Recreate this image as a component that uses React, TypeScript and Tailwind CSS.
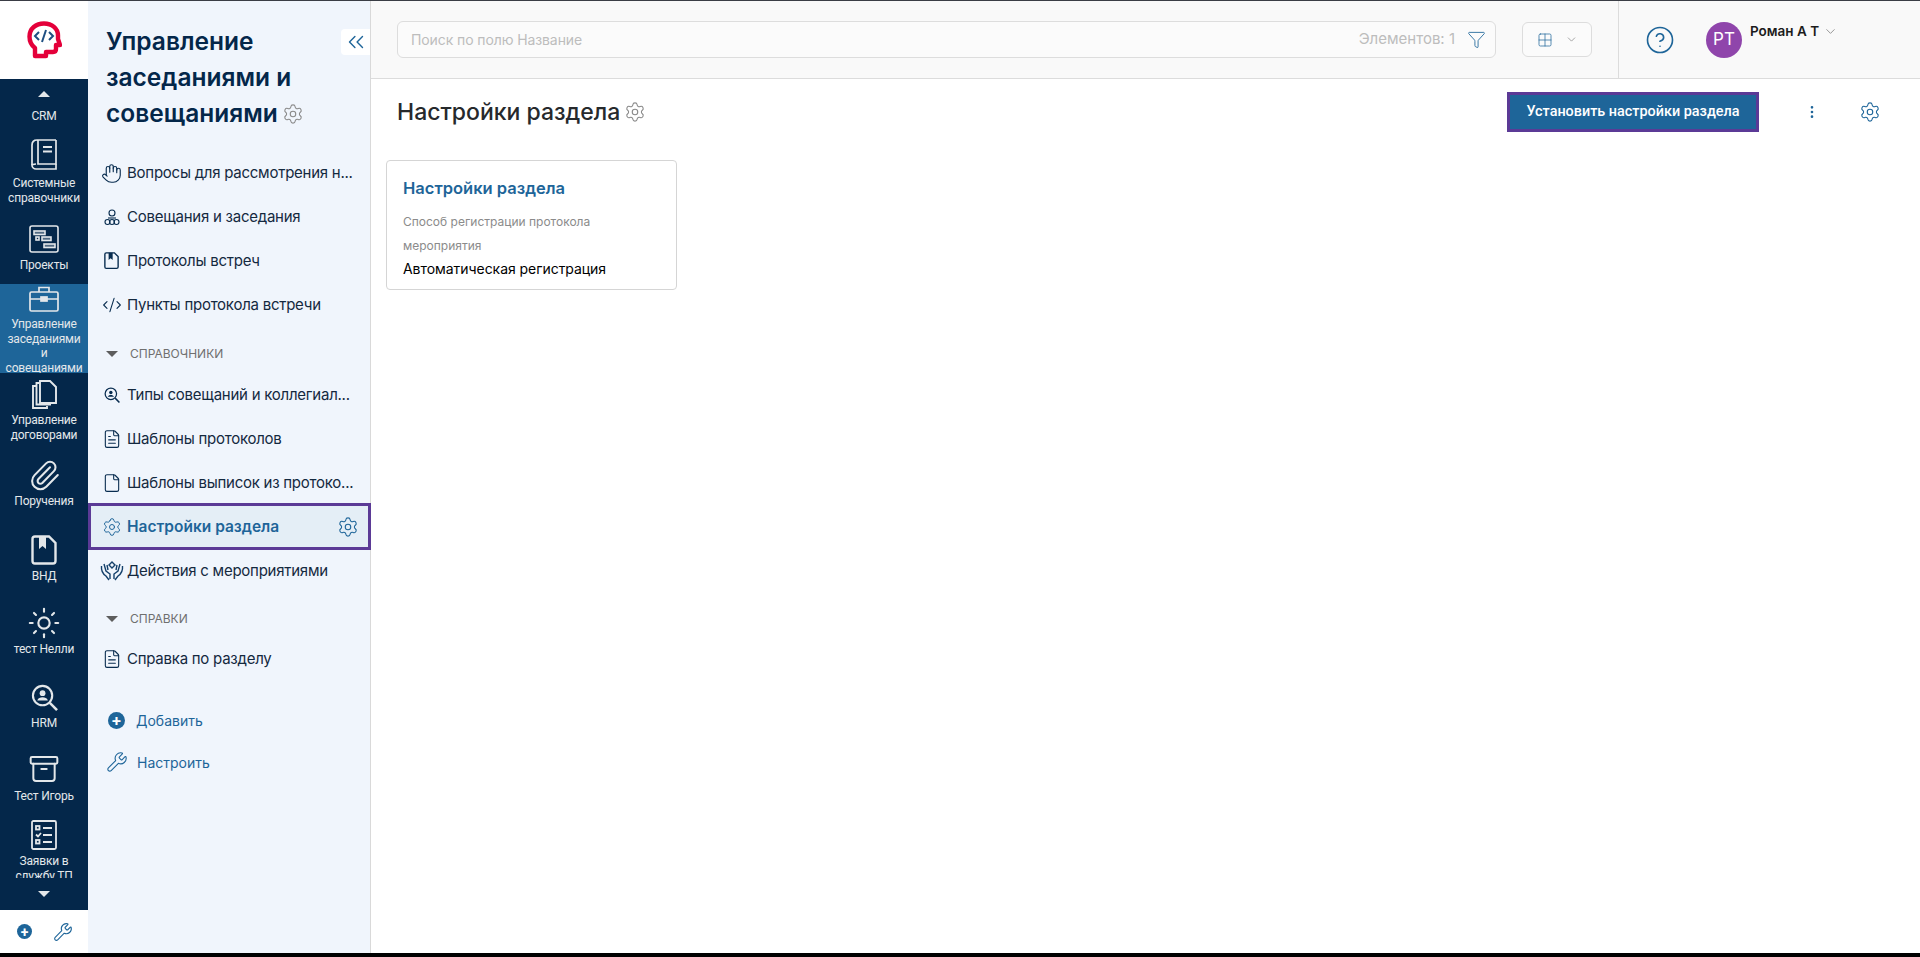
import type { ReactNode } from 'react';
import {
  Archive,
  ChevronDown,
  ChevronsLeft,
  CircleHelp,
  CodeXml,
  File,
  FileText,
  Funnel,
  Grid2x2,
  EllipsisVertical,
  Hand,
  Paperclip,
  Settings,
  Sun,
  Wrench,
} from 'lucide-react';

const inter = "font-['Inter','Noto_Sans',sans-serif]";

function Logo() {
  return (
    <svg width="35" height="38" viewBox="0 0 35 38" fill="none">
      <path
        d="M8 35V27C4 24 2.5 20 2.5 15.5C2.5 7.5 9 2.5 17 2.5C25 2.5 31 7.5 31 14.5V18L33 24H29V28C29 30 28 31 26 31H19V35H8Z"
        stroke="#e4003a"
        strokeWidth="4.4"
        strokeLinejoin="round"
      />
      <path d="M12 11L8 15L12 19M22 11L26 15L22 19M19 9L15 21" stroke="#1e4f82" strokeWidth="2" />
    </svg>
  );
}

function BookIcon() {
  return (
    <svg width="26" height="31" viewBox="0 0 26 31" fill="none" stroke="#e3e7ea" strokeWidth="1.7">
      <path d="M25 1H6C3 1 1 3 1 6V26C1 28.5 3 30 5 30H25V25" />
      <path d="M7 1V25H25V1" />
      <path d="M1 26C1 25.5 3 25 5 25" />
      <path d="M12 8H21M12 12.5H21" strokeWidth="2" />
    </svg>
  );
}

function PlanIcon() {
  return (
    <svg width="30" height="28" viewBox="0 0 30 28" fill="none" stroke="#e3e7ea" strokeWidth="1.6">
      <rect x="1" y="1" width="28" height="26" rx="2" />
      <rect x="5" y="6" width="11" height="3.5" fill="#e3e7ea" fillOpacity=".35" />
      <rect x="7" y="12" width="3" height="3" />
      <rect x="13" y="12" width="9" height="3.5" fill="#e3e7ea" fillOpacity=".35" />
      <rect x="15" y="19" width="11" height="3.5" fill="#e3e7ea" fillOpacity=".35" />
    </svg>
  );
}

function CaseIcon() {
  return (
    <svg width="30" height="26" viewBox="0 0 30 26" fill="none" stroke="#e3e7ea" strokeWidth="1.7">
      <rect x="1" y="6" width="28" height="19" rx="1.5" />
      <path d="M10 6V1.5H20V6" />
      <path d="M1 13H12M18 13H29" />
      <rect x="12" y="11" width="6" height="4" fill="#e3e7ea" />
    </svg>
  );
}

function FilesIcon() {
  return (
    <svg width="25" height="29" viewBox="0 0 25 29" fill="none" stroke="#e3e7ea" strokeWidth="1.9">
      <path d="M4 6H1V28H15V26" />
      <path d="M7 3H4.5V24.5H19" />
      <path d="M8 1H18L24 7V23H8Z" />
    </svg>
  );
}

function BookmarkDoc({ size = 26, color = '#e3e7ea' }: { size?: number; color?: string }) {
  return (
    <svg width={size} height={(size * 30) / 26} viewBox="0 0 26 30" fill="none" stroke={color} strokeWidth="2.4">
      <path d="M4 1.5H18L24.5 8V26C24.5 27.5 23.5 28.5 22 28.5H4C2.5 28.5 1.5 27.5 1.5 26V4C1.5 2.5 2.5 1.5 4 1.5Z" />
      <path d="M8 1.5V14L11.5 11L15 14V1.5Z" fill={color} stroke="none" />
    </svg>
  );
}

function PersonSearch({ size = 28, color = '#e3e7ea' }: { size?: number; color?: string }) {
  return (
    <svg width={size} height={size} viewBox="0 0 28 28" fill="none" stroke={color} strokeWidth="2.2">
      <circle cx="12" cy="12" r="10" />
      <path d="M19.5 19.5L27 27" strokeWidth="2.6" />
      <circle cx="12" cy="9.5" r="3" fill={color} stroke="none" />
      <path d="M6.5 17C7.5 14.5 9.5 13.8 12 13.8S16.5 14.5 17.5 17Z" fill={color} stroke="none" />
    </svg>
  );
}

function ChecklistIcon() {
  return (
    <svg width="26" height="30" viewBox="0 0 26 30" fill="none" stroke="#e3e7ea" strokeWidth="1.8">
      <rect x="1" y="1" width="24" height="28" rx="1.5" />
      <rect x="5" y="6" width="3.5" height="3.5" />
      <path d="M12 8H21M5 14.5L7 16.5L10 13M12 15H21M12 22H21" />
      <rect x="5" y="20" width="3.5" height="3.5" />
    </svg>
  );
}

function MeetingIcon() {
  return (
    <svg width="16" height="17" viewBox="0 0 16 17" fill="none" stroke="#082c4f" strokeWidth="1.1">
      <circle cx="8" cy="4" r="3" />
      <path d="M4 9H12" />
      <circle cx="3.5" cy="13" r="2.5" />
      <circle cx="8" cy="13" r="2.5" />
      <circle cx="12.5" cy="13" r="2.5" />
    </svg>
  );
}

function HandsIcon() {
  return (
    <svg width="24" height="20" viewBox="0 0 24 20" fill="none" stroke="#14406b" strokeWidth="1.4">
      <path d="M12 1L15 4L12 7L9 4Z" />
      <path d="M1.5 5C1 10 3 13 6 15L9 19M4 3L6 10L10 13V18" />
      <path d="M7 4L8 9" />
      <path d="M22.5 5C23 10 21 13 18 15L15 19M20 3L18 10L14 13V18" />
      <path d="M17 4L16 9" />
    </svg>
  );
}

function RailItem({
  height,
  top,
  gap = 'mt-[4px]',
  icon,
  active,
  children,
}: {
  height: string;
  top: string;
  gap?: string;
  icon: ReactNode;
  active?: boolean;
  children: ReactNode;
}) {
  return (
    <div className={`${height} ${top} ${active ? 'bg-[#1e6599]' : ''} flex shrink-0 flex-col items-center overflow-hidden`}>
      <div className="flex h-[30px] shrink-0 items-center justify-center">{icon}</div>
      <div className={`${gap} text-center text-[12px] leading-[14.6px] tracking-[-0.2px] text-[#e3e7ea]`}>{children}</div>
    </div>
  );
}

function Rail() {
  const ic = { color: '#e3e7ea', strokeWidth: 1.5 };
  return (
    <aside className="flex w-[88px] shrink-0 flex-col bg-[#04274a] font-['Roboto',sans-serif]">
      <div className="flex h-[78px] shrink-0 items-center justify-center bg-white">
        <Logo />
      </div>
      <div className="flex min-h-0 flex-1 flex-col overflow-hidden">
        <div className="flex h-[54px] shrink-0 flex-col items-center pt-[12px]">
          <div className="h-0 w-0 border-x-[6px] border-b-[6px] border-x-transparent border-b-[#e3e7ea]" />
          <div className="mt-[12px] text-[12px] leading-[15px] tracking-[-0.2px] text-[#e3e7ea]">CRM</div>
        </div>
        <RailItem height="h-[83px]" top="pt-[6px]" gap="mt-[7px]" icon={<BookIcon />}>
          Системные<br />справочники
        </RailItem>
        <RailItem height="h-[68px]" top="pt-[8px]" icon={<PlanIcon />}>
          Проекты
        </RailItem>
        <RailItem height="h-[89px]" top="pt-0" gap="mt-[3px]" icon={<CaseIcon />} active>
          Управление<br />заседаниями<br />и<br />совещаниями
        </RailItem>
        <RailItem height="h-[79px]" top="pt-[6px]" icon={<FilesIcon />}>
          Управление<br />договорами
        </RailItem>
        <RailItem height="h-[75px]" top="pt-[8px]" icon={<Paperclip size={33} {...ic} />}>
          Поручения
        </RailItem>
        <RailItem height="h-[75px]" top="pt-[8px]" icon={<BookmarkDoc />}>
          ВНД
        </RailItem>
        <RailItem height="h-[76px]" top="pt-[6px]" icon={<Sun size={34} {...ic} />}>
          тест Нелли
        </RailItem>
        <RailItem height="h-[71px]" top="pt-[4px]" icon={<PersonSearch size={27} />}>
          HRM
        </RailItem>
        <RailItem height="h-[63px]" top="pt-[5px]" gap="mt-[5px]" icon={<Archive size={32} {...ic} />}>
          Тест Игорь
        </RailItem>
        <RailItem height="h-[66px]" top="pt-[8px]" icon={<ChecklistIcon />}>
          Заявки в<br />службу ТП
        </RailItem>
        <div className="flex flex-1 items-center justify-center bg-[#04274a]">
          <div className="h-0 w-0 border-x-[6px] border-t-[6px] border-x-transparent border-t-[#e3e7ea]" />
        </div>
      </div>
      <div className="flex h-[43px] shrink-0 items-center justify-between bg-white pl-[17px] pr-[15px]">
        <div className="flex h-[15px] w-[15px] items-center justify-center rounded-full bg-[#1e6599] text-[14px] font-bold leading-none text-white">+</div>
        <Wrench size={20} color="#1e6599" strokeWidth={1.3} />
      </div>
    </aside>
  );
}

function NavRow({ icon, children }: { icon: ReactNode; children: ReactNode }) {
  return (
    <div className="flex h-[44px] items-center pl-[8px]">
      <div className="flex w-[31px] shrink-0 items-center justify-center">{icon}</div>
      <span className="whitespace-nowrap text-[15px] tracking-[-0.25px] text-[#14293f]">{children}</span>
    </div>
  );
}

function SectionRow({ children }: { children: ReactNode }) {
  return (
    <div className="flex h-[40px] items-center pl-[18px]">
      <div className="h-0 w-0 border-x-[6px] border-t-[6px] border-x-transparent border-t-[#5d5d5d]" />
      <span className="ml-[12px] text-[12px] text-[#6f6f6f]">{children}</span>
    </div>
  );
}

function Sidebar() {
  const ink = { color: '#082c4f', strokeWidth: 1.3 };
  return (
    <aside className={`${inter} relative flex w-[283px] shrink-0 flex-col border-r border-[#d9d9d9] bg-[#f0f5fc]`}>
      <div className="absolute right-0 top-[28px] flex h-[26px] w-[29px] items-center justify-center rounded-l bg-white">
        <ChevronsLeft size={26} color="#1e6599" strokeWidth={1.3} />
      </div>
      <h1 className="pl-[18px] pr-[40px] pt-[22px] text-[24.5px] font-semibold leading-[36px] text-[#04274a]">
        Управление заседаниями и совещаниями
        <Settings size={22} color="#8a8a8a" strokeWidth={1.2} className="ml-[4px] inline align-[-3px]" />
      </h1>
      <div className="mt-[20px]">
        <NavRow icon={<Hand size={21} {...ink} />}>Вопросы для рассмотрения н...</NavRow>
        <NavRow icon={<MeetingIcon />}>Совещания и заседания</NavRow>
        <NavRow icon={<BookmarkDoc size={15} color="#082c4f" />}>Протоколы встреч</NavRow>
        <NavRow icon={<CodeXml size={20} {...ink} />}>Пункты протокола встречи</NavRow>
      </div>
      <div className="mt-[7px]">
        <SectionRow>СПРАВОЧНИКИ</SectionRow>
      </div>
      <div className="mt-[-1px]">
        <NavRow icon={<PersonSearch size={16} color="#082c4f" />}>Типы совещаний и коллегиал...</NavRow>
        <NavRow icon={<FileText size={20} {...ink} />}>Шаблоны протоколов</NavRow>
        <NavRow icon={<File size={20} {...ink} />}>Шаблоны выписок из протоко...</NavRow>
        <div className="mr-[-1px] mt-[-2px] flex h-[47px] items-center border-[3px] border-[#5b3a96] bg-[#e4eef6] pl-[5px] pr-[9px]">
          <div className="flex w-[31px] shrink-0 items-center justify-center">
            <Settings size={20} color="#1e6599" strokeWidth={1.2} />
          </div>
          <span className="flex-1 truncate text-[15.5px] font-semibold text-[#1e6599]">Настройки раздела</span>
          <Settings size={22} color="#1e6599" strokeWidth={1.2} />
        </div>
        <div className="mt-[-1px]">
          <NavRow icon={<HandsIcon />}>Действия с мероприятиями</NavRow>
        </div>
      </div>
      <div className="mt-[6px]">
        <SectionRow>СПРАВКИ</SectionRow>
      </div>
      <div className="mt-[-2px]">
        <NavRow icon={<FileText size={20} {...ink} />}>Справка по разделу</NavRow>
      </div>
      <div className="mt-[18px] flex h-[42px] items-center pl-[20px] text-[14px] text-[#1e6599]">
        <div className="flex h-[17px] w-[17px] items-center justify-center rounded-full bg-[#1e6599] text-[16px] font-bold leading-none text-white">+</div>
        <span className="ml-[11px]">Добавить</span>
      </div>
      <div className="flex h-[42px] items-center pl-[18px] text-[14px] text-[#1e6599]">
        <Wrench size={22} color="#1e6599" strokeWidth={1.2} />
        <span className="ml-[9px]">Настроить</span>
      </div>
    </aside>
  );
}

function TopBar() {
  return (
    <header className={`${inter} flex h-[78px] shrink-0 items-center border-b border-[#dcdcdc] bg-[#f9f9f9]`}>
      <div className="ml-[26px] flex h-[37px] w-[1099px] items-center rounded-md border border-[#dddddd] bg-[#fbfbfb] pl-[13px] pr-[9px]">
        <span className="flex-1 text-[14px] tracking-[-0.1px] text-[#bdbdbd]">Поиск по полю Название</span>
        <span className="text-[15px] text-[#bdbdbd]">Элементов: 1</span>
        <Funnel size={19} color="#1e6599" strokeWidth={1.1} className="ml-[12px]" />
      </div>
      <div className="ml-[26px] flex h-[35px] w-[70px] items-center justify-center gap-[12px] rounded-md border border-[#dddddd] bg-[#fbfbfb]">
        <Grid2x2 size={16} color="#1e6599" strokeWidth={1.1} />
        <ChevronDown size={13} color="#777777" strokeWidth={1.2} />
      </div>
      <div className="ml-[26px] h-full w-px bg-[#dcdcdc]" />
      <CircleHelp size={30} color="#1e6599" strokeWidth={1.3} className="ml-[26px]" />
      <div className="ml-[31px] flex h-[36px] w-[36px] items-center justify-center rounded-full bg-[#8f45ab] text-[17px] text-white">
        PT
      </div>
      <div className="mb-[16px] ml-[8px] flex items-center">
        <span className="text-[13.5px] font-semibold text-[#1c1c1c]">Роман А Т</span>
        <ChevronDown size={15} color="#777777" strokeWidth={1.2} className="ml-[4px]" />
      </div>
    </header>
  );
}

function Content() {
  return (
    <main className={`${inter} min-h-0 flex-1 bg-white`}>
      <div className="flex h-[66px] items-center pl-[26px] pr-[39px]">
        <h2 className="text-[23px] font-medium text-[#26292c]">Настройки раздела</h2>
        <Settings size={22} color="#8a8a8a" strokeWidth={1.2} className="ml-[4px]" />
        <button className="ml-auto flex h-[40px] w-[252px] items-center justify-center border-[3px] border-[#5b3a96] bg-[#1e6599] font-['Roboto',sans-serif] text-[14.4px] font-medium text-white">
          Установить настройки раздела
        </button>
        <EllipsisVertical size={16} color="#1e6599" strokeWidth={2} className="ml-[45px]" />
        <Settings size={22} color="#1e6599" strokeWidth={1.2} className="ml-[39px]" />
      </div>
      <div className="ml-[15px] mt-[15px] h-[130px] w-[291px] rounded border border-[#d5d5d5] px-[16px] pt-[15px]">
        <div className="text-[16.5px] font-semibold leading-[24px] text-[#1e6599]">Настройки раздела</div>
        <div className="mt-[10px] text-[12px] leading-[24px] text-[#8b8b8b]">Способ регистрации протокола мероприятия</div>
        <div className="text-[14px] leading-[22px] tracking-[-0.05px] text-black">Автоматическая регистрация</div>
      </div>
    </main>
  );
}

export default function App() {
  return (
    <div className="flex h-[957px] w-[1920px] flex-col overflow-hidden bg-white">
      <div className="h-px shrink-0 bg-[#3a3d45]" />
      <div className="flex min-h-0 flex-1">
        <Rail />
        <Sidebar />
        <div className="flex min-w-0 flex-1 flex-col">
          <TopBar />
          <Content />
        </div>
      </div>
      <div className="h-[4px] shrink-0 bg-black" />
    </div>
  );
}
